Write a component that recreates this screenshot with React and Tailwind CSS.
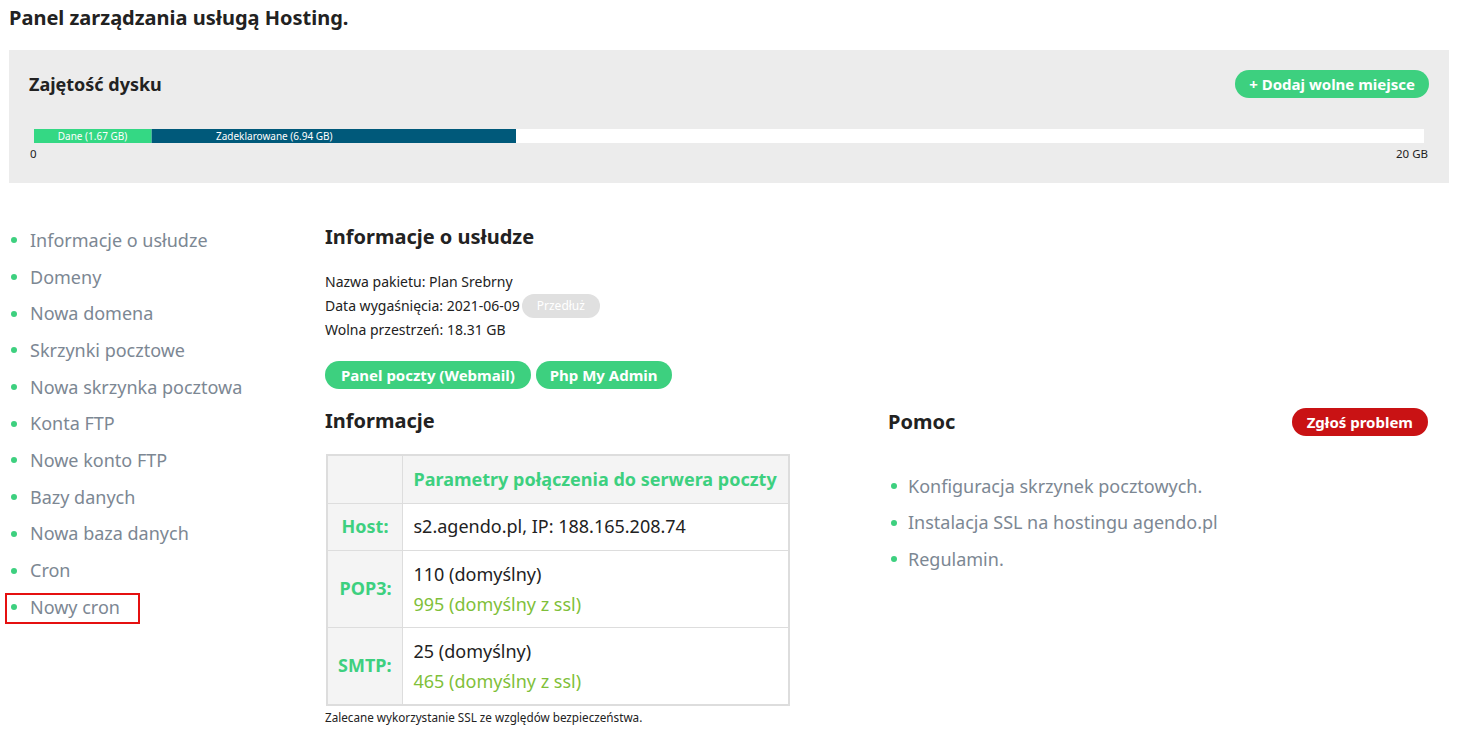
const menu = [
  'Informacje o usłudze',
  'Domeny',
  'Nowa domena',
  'Skrzynki pocztowe',
  'Nowa skrzynka pocztowa',
  'Konta FTP',
  'Nowe konto FTP',
  'Bazy danych',
  'Nowa baza danych',
  'Cron',
  'Nowy cron',
]

const help = [
  'Konfiguracja skrzynek pocztowych.',
  'Instalacja SSL na hostingu agendo.pl',
  'Regulamin.',
]

function Bullet() {
  return <span className="w-[6px] h-[6px] rounded-full bg-[#3dd07f] shrink-0" />
}

export default function App() {
  return (
    <div className="w-[1458px] h-[736px] bg-white text-[#222] overflow-hidden" style={{ fontFamily: '"Noto Sans", "Open Sans", sans-serif' }}>
      <h1 className="pl-[9px] pt-[4px] h-[50px] text-[20px] font-bold leading-[28px]">Panel zarządzania usługą Hosting.</h1>

      {/* Disk usage */}
      <div className="mx-[9px] h-[133px] bg-[#ececec] pl-[20px] pr-[20px] pt-[20px]">
        <div className="flex items-center justify-between h-[28px]">
          <h2 className="text-[18px] font-bold leading-[26px]">Zajętość dysku</h2>
          <button className="h-[28px] px-[14px] rounded-full bg-[#3dd07f] text-white text-[15px] font-bold leading-[28px]">+ Dodaj wolne miejsce</button>
        </div>
        <div className="mt-[31px] ml-[5px] mr-[5px] h-[14px] bg-white flex">
          <div className="w-[117px] bg-[#34d884] text-white text-[10px] leading-[14px] text-center">Dane (1.67 GB)</div>
          <div className="w-[365px] bg-[#00597a] text-white text-[10px] leading-[14px] pl-[64px] border-l border-[#4fb3a0]">Zadeklarowane (6.94 GB)</div>
        </div>
        <div className="flex justify-between text-[11.5px] leading-[16px] mt-[3px] ml-[1px] mr-[1px]">
          <span>0</span>
          <span>20 GB</span>
        </div>
      </div>

      <div className="flex pt-[40px]">
        {/* Sidebar */}
        <ul className="w-[325px] shrink-0 pl-[11px] mt-[-1px]">
          {menu.map((m, i) => (
            <li key={m} className={`flex items-center h-[36.7px] text-[18px] text-[#7c8793] ${i === menu.length - 1 ? 'relative' : ''}`}>
              {i === menu.length - 1 && <span className="absolute left-[-6px] top-[4px] w-[135px] h-[31px] border-2 border-[#e51010]" />}
              <Bullet />
              <span className="ml-[13px]">{m}</span>
            </li>
          ))}
        </ul>

        {/* Main */}
        <div className="flex-1 pr-[30px]">
          <h2 className="text-[20px] font-bold leading-[26px] mt-[1px]">Informacje o usłudze</h2>
          <div className="mt-[20px] text-[14px] leading-[24px]">
            <p>Nazwa pakietu: Plan Srebrny</p>
            <p className="flex items-center">Data wygaśnięcia: 2021-06-09<span className="ml-[2px] h-[24px] px-[15px] rounded-full bg-[#e0e0e0] text-white text-[12px] leading-[24px]">Przedłuż</span></p>
            <p>Wolna przestrzeń: 18.31 GB</p>
          </div>
          <div className="flex gap-[5px] mt-[19px]">
            <button className="h-[28px] px-[16px] rounded-full bg-[#3dd07f] text-white text-[15px] font-bold leading-[28px]">Panel poczty (Webmail)</button>
            <button className="h-[28px] px-[14px] rounded-full bg-[#3dd07f] text-white text-[15px] font-bold leading-[28px]">Php My Admin</button>
          </div>

          <div className="flex mt-[19px]">
            <div className="w-[563px]">
              <h2 className="text-[20px] font-bold leading-[26px]">Informacje</h2>
              <table className="mt-[20px] ml-[1px] border-2 border-[#ddd] border-collapse text-[18px]">
                <tbody>
                  <tr className="h-[48px]">
                    <td className="w-[75px] bg-[#f4f4f4] border border-[#ddd]" />
                    <td className="bg-[#f4f4f4] border border-[#ddd] px-[11px] text-[#3dd07f] font-bold">Parametry połączenia do serwera poczty</td>
                  </tr>
                  <tr className="h-[47px]">
                    <td className="bg-[#f4f4f4] border border-[#ddd] text-right pr-[13px] text-[#3dd07f] font-bold">Host:</td>
                    <td className="border border-[#ddd] px-[11px]">s2.agendo.pl, IP: 188.165.208.74</td>
                  </tr>
                  <tr className="h-[77px]">
                    <td className="bg-[#f4f4f4] border border-[#ddd] text-right pr-[10px] text-[#3dd07f] font-bold">POP3:</td>
                    <td className="border border-[#ddd] px-[11px] leading-[30px]">
                      <div>110 (domyślny)</div>
                      <div className="text-[#7fbf3a]">995 (domyślny z ssl)</div>
                    </td>
                  </tr>
                  <tr className="h-[78px]">
                    <td className="bg-[#f4f4f4] border border-[#ddd] text-right pr-[10px] text-[#3dd07f] font-bold">SMTP:</td>
                    <td className="border border-[#ddd] px-[11px] leading-[30px]">
                      <div>25 (domyślny)</div>
                      <div className="text-[#7fbf3a]">465 (domyślny z ssl)</div>
                    </td>
                  </tr>
                </tbody>
              </table>
              <p className="text-[11.7px] leading-[16px] mt-[3px]">Zalecane wykorzystanie SSL ze względów bezpieczeństwa.</p>
            </div>

            <div className="flex-1">
              <div className="flex items-center justify-between">
                <h2 className="text-[20px] font-bold leading-[26px]">Pomoc</h2>
                <button className="h-[28px] px-[15px] rounded-full bg-[#c91214] text-white text-[15px] font-bold leading-[28px]">Zgłoś problem</button>
              </div>
              <ul className="mt-[32px] pl-[3px]">
                {help.map(h => (
                  <li key={h} className="flex items-center h-[36.5px] text-[18px] text-[#7c8793]">
                    <Bullet />
                    <span className="ml-[11px]">{h}</span>
                  </li>
                ))}
              </ul>
            </div>
          </div>
        </div>
      </div>
    </div>
  )
}
